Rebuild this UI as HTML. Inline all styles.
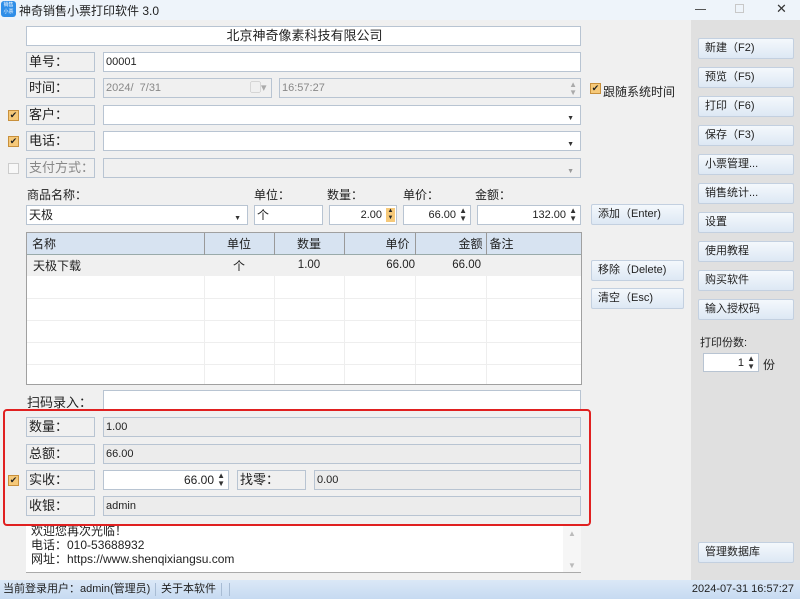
<!DOCTYPE html>
<html><head><meta charset="utf-8"><style>
*{box-sizing:border-box;margin:0;padding:0}
body{width:800px;height:599px;position:relative;overflow:hidden;background:#f0f0f0;font-family:"Liberation Sans","Noto Sans CJK SC",sans-serif;font-size:12px;color:#222}
.a{position:absolute}
.t{position:absolute;top:0;left:0;width:800px;height:20px;background:#eef4fa}
.in{position:absolute;background:#fff;border:1px solid #b8c4d2;height:20px;line-height:18px;padding-left:2px;font-size:11px}
.dis{background:#f0f0f0;color:#888}
.ro{background:#ececec;border:1px solid #b8c4d2;font-size:11px}
.lb{position:absolute;border:1px solid #b8c4d2;background:#f0f0f0;height:20px;line-height:18px;padding-left:2px;font-size:13px;width:69px;left:26px}
.cb{position:absolute;left:8px;width:11px;height:11px;background:#f6c979;border:1px solid #c8903c;font-size:9px;line-height:9px;text-align:center;color:#222}
.btn{position:absolute;height:21px;border:1px solid #c3d0e0;background:linear-gradient(#f4f8fc,#dde8f4);font-size:11px;line-height:19px;padding-left:6px;border-radius:2px}
.rb{left:698px;width:96px}
.lbl{position:absolute;font-size:12px}
.dd{position:absolute;right:6px;top:4px;font-size:7px;color:#333}
.sp{position:absolute;right:3px;top:1px;font-size:8px;line-height:8px;color:#333}
table{border-collapse:collapse;font-size:12px}
.n{font-size:11.5px}
</style></head><body>
<div class="t">
<div class="a" style="left:1px;top:1px;width:15px;height:16px;background:#2f8ee8;border-radius:3px;color:#fff;font-size:5px;line-height:7px;text-align:center;padding-top:1px">销售<br>小票</div>
<div class="a" style="left:19px;top:2px;font-size:12px">神奇销售小票打印软件 3.0</div>
<div class="a" style="left:695px;top:9px;width:11px;height:1px;background:#555"></div>
<div class="a" style="left:735px;top:4px;width:9px;height:9px;border:1px solid #c8c8c8"></div>
<div class="a" style="left:776px;top:1px;font-size:13px;color:#333">✕</div>
</div>
<div class="a" style="left:691px;top:20px;width:109px;height:560px;background:#e0e0e0"></div>

<div class="in" style="left:26px;top:26px;width:555px;text-align:center;font-size:13px">北京神奇像素科技有限公司</div>
<div class="lb" style="top:52px">单号：</div><div class="in" style="left:103px;top:52px;width:478px">00001</div>
<div class="lb" style="top:78px">时间：</div>
<div class="in dis" style="left:103px;top:78px;width:169px">2024/&nbsp; 7/31<span class="a" style="left:146px;top:0;color:#aaa">▢▾</span></div>
<div class="in dis" style="left:279px;top:78px;width:302px">16:57:27<span class="sp" style="color:#aaa;top:2px">▲<br>▼</span></div>
<div class="cb" style="top:83px;left:590px">✔</div><div class="lbl" style="left:603px;top:83px">跟随系统时间</div>
<div class="cb" style="top:110px">✔</div><div class="lb" style="top:105px">客户：</div><div class="in" style="left:103px;top:105px;width:478px"><span class="dd">▼</span></div>
<div class="cb" style="top:136px">✔</div><div class="lb" style="top:131px">电话：</div><div class="in" style="left:103px;top:131px;width:478px"><span class="dd">▼</span></div>
<div class="cb" style="top:163px;background:#f8f8f8;border-color:#ccc"></div><div class="lb" style="top:158px;color:#888">支付方式：</div><div class="in dis" style="left:103px;top:158px;width:478px"><span class="dd" style="color:#999">▼</span></div>

<div class="lbl" style="left:27px;top:186px">商品名称：</div>
<div class="lbl" style="left:254px;top:186px">单位：</div>
<div class="lbl" style="left:327px;top:186px">数量：</div>
<div class="lbl" style="left:403px;top:186px">单价：</div>
<div class="lbl" style="left:475px;top:186px">金额：</div>
<div class="in" style="left:26px;top:205px;width:222px;font-size:12px">天极<span class="dd">▼</span></div>
<div class="in" style="left:254px;top:205px;width:69px;font-size:12px">个</div>
<div class="in" style="left:329px;top:205px;width:68px;text-align:right;padding-right:14px">2.00<span class="a" style="right:1px;top:2px;width:9px;height:14px;background:#f6c979;font-size:6px;line-height:7px;text-align:center">▲<br>▼</span></div>
<div class="in" style="left:403px;top:205px;width:68px;text-align:right;padding-right:14px">66.00<span class="sp">▲<br>▼</span></div>
<div class="in" style="left:477px;top:205px;width:104px;text-align:right;padding-right:14px">132.00<span class="sp">▲<br>▼</span></div>
<div class="btn" style="left:591px;top:204px;width:93px">添加（Enter)</div>
<div class="btn" style="left:591px;top:260px;width:93px">移除（Delete)</div>
<div class="btn" style="left:591px;top:288px;width:93px">清空（Esc)</div>

<div class="a" style="left:26px;top:232px;width:556px;height:153px;border:1px solid #a0a0a0;background:#fff;overflow:hidden">
<table style="width:554px">
<tr style="height:21px;background:#d7e3f1;border-bottom:1px solid #9aa">
<td style="width:177px;padding-left:5px;border-right:1px solid #999">名称</td>
<td style="width:70px;text-align:center;border-right:1px solid #999">单位</td>
<td style="width:70px;text-align:center;border-right:1px solid #999">数量</td>
<td style="width:71px;text-align:right;padding-right:5px;border-right:1px solid #999">单价</td>
<td style="width:71px;text-align:right;padding-right:3px;border-right:1px solid #999">金额</td>
<td style="padding-left:3px">备注</td></tr>
<tr style="height:22px;background:#f0f0f0"><td style="padding-left:6px">天极下载</td><td style="text-align:center">个</td><td class="n" style="text-align:center">1.00</td><td class="n" style="text-align:right">66.00</td><td class="n" style="text-align:right;padding-right:5px">66.00</td><td></td></tr>
<tr style="height:22px;border-bottom:1px solid #eee"><td style="border-right:1px solid #eee"></td><td style="border-right:1px solid #eee"></td><td style="border-right:1px solid #eee"></td><td style="border-right:1px solid #eee"></td><td style="border-right:1px solid #eee"></td><td></td></tr>
<tr style="height:22px;border-bottom:1px solid #eee"><td style="border-right:1px solid #eee"></td><td style="border-right:1px solid #eee"></td><td style="border-right:1px solid #eee"></td><td style="border-right:1px solid #eee"></td><td style="border-right:1px solid #eee"></td><td></td></tr>
<tr style="height:22px;border-bottom:1px solid #eee"><td style="border-right:1px solid #eee"></td><td style="border-right:1px solid #eee"></td><td style="border-right:1px solid #eee"></td><td style="border-right:1px solid #eee"></td><td style="border-right:1px solid #eee"></td><td></td></tr>
<tr style="height:22px;border-bottom:1px solid #eee"><td style="border-right:1px solid #eee"></td><td style="border-right:1px solid #eee"></td><td style="border-right:1px solid #eee"></td><td style="border-right:1px solid #eee"></td><td style="border-right:1px solid #eee"></td><td></td></tr>
<tr style="height:22px"><td style="border-right:1px solid #eee"></td><td style="border-right:1px solid #eee"></td><td style="border-right:1px solid #eee"></td><td style="border-right:1px solid #eee"></td><td style="border-right:1px solid #eee"></td><td></td></tr>
</table></div>

<div class="lbl" style="left:27px;top:392px;font-size:13px">扫码录入：</div>
<div class="in" style="left:103px;top:390px;width:478px"></div>

<div class="lb" style="top:417px">数量：</div><div class="in ro" style="left:103px;top:417px;width:478px">1.00</div>
<div class="lb" style="top:444px">总额：</div><div class="in ro" style="left:103px;top:444px;width:478px">66.00</div>
<div class="cb" style="top:475px">✔</div><div class="lb" style="top:470px">实收：</div>
<div class="in" style="left:103px;top:470px;width:126px;text-align:right;padding-right:14px;font-size:12px">66.00<span class="sp">▲<br>▼</span></div>
<div class="lb" style="top:470px;left:237px">找零：</div><div class="in ro" style="left:314px;top:470px;width:267px">0.00</div>
<div class="lb" style="top:496px">收银：</div><div class="in ro" style="left:103px;top:496px;width:478px">admin</div>
<div class="a" style="left:3px;top:409px;width:588px;height:117px;border:2px solid #e02020;border-radius:4px"></div>

<div class="a" style="left:26px;top:526px;width:555px;height:47px;background:#fff;border-bottom:1px solid #aaa;font-size:12px;line-height:14px;padding-left:5px;overflow:hidden">
<div style="margin-top:-2px">欢迎您再次光临！</div><div>电话：010-53688932</div><div>网址：https://www.shenqixiangsu.com</div>
<div class="a" style="right:0;top:0;width:18px;height:46px;background:#f6f6f6;color:#bbb;font-size:8px;text-align:center;line-height:10px"><div style="margin-top:3px">▲</div><div style="margin-top:22px">▼</div></div></div>

<div class="btn rb" style="top:38px">新建（F2)</div>
<div class="btn rb" style="top:67px">预览（F5)</div>
<div class="btn rb" style="top:96px">打印（F6)</div>
<div class="btn rb" style="top:125px">保存（F3)</div>
<div class="btn rb" style="top:154px">小票管理...</div>
<div class="btn rb" style="top:183px">销售统计...</div>
<div class="btn rb" style="top:212px">设置</div>
<div class="btn rb" style="top:241px">使用教程</div>
<div class="btn rb" style="top:270px">购买软件</div>
<div class="btn rb" style="top:299px">输入授权码</div>
<div class="lbl" style="left:700px;top:334px;font-size:11px">打印份数:</div>
<div class="in" style="left:703px;top:353px;width:56px;text-align:right;padding-right:14px;height:19px">1<span class="sp">▲<br>▼</span></div>
<div class="lbl" style="left:763px;top:356px">份</div>
<div class="btn rb" style="top:542px">管理数据库</div>

<div class="a" style="left:0;top:580px;width:800px;height:19px;background:linear-gradient(#dbe8f7,#c6daf1);font-size:11px;line-height:19px">
<span class="a" style="left:3px">当前登录用户：admin(管理员)</span>
<span class="a" style="left:155px;top:3px;height:13px;border-left:1px solid #a8bcd4"></span>
<span class="a" style="left:161px">关于本软件</span>
<span class="a" style="left:221px;top:3px;height:13px;border-left:1px solid #a8bcd4"></span>
<span class="a" style="left:229px;top:3px;height:13px;border-left:1px solid #a8bcd4"></span>
<span class="a" style="right:6px">2024-07-31 16:57:27</span>
</div>
</body></html>
